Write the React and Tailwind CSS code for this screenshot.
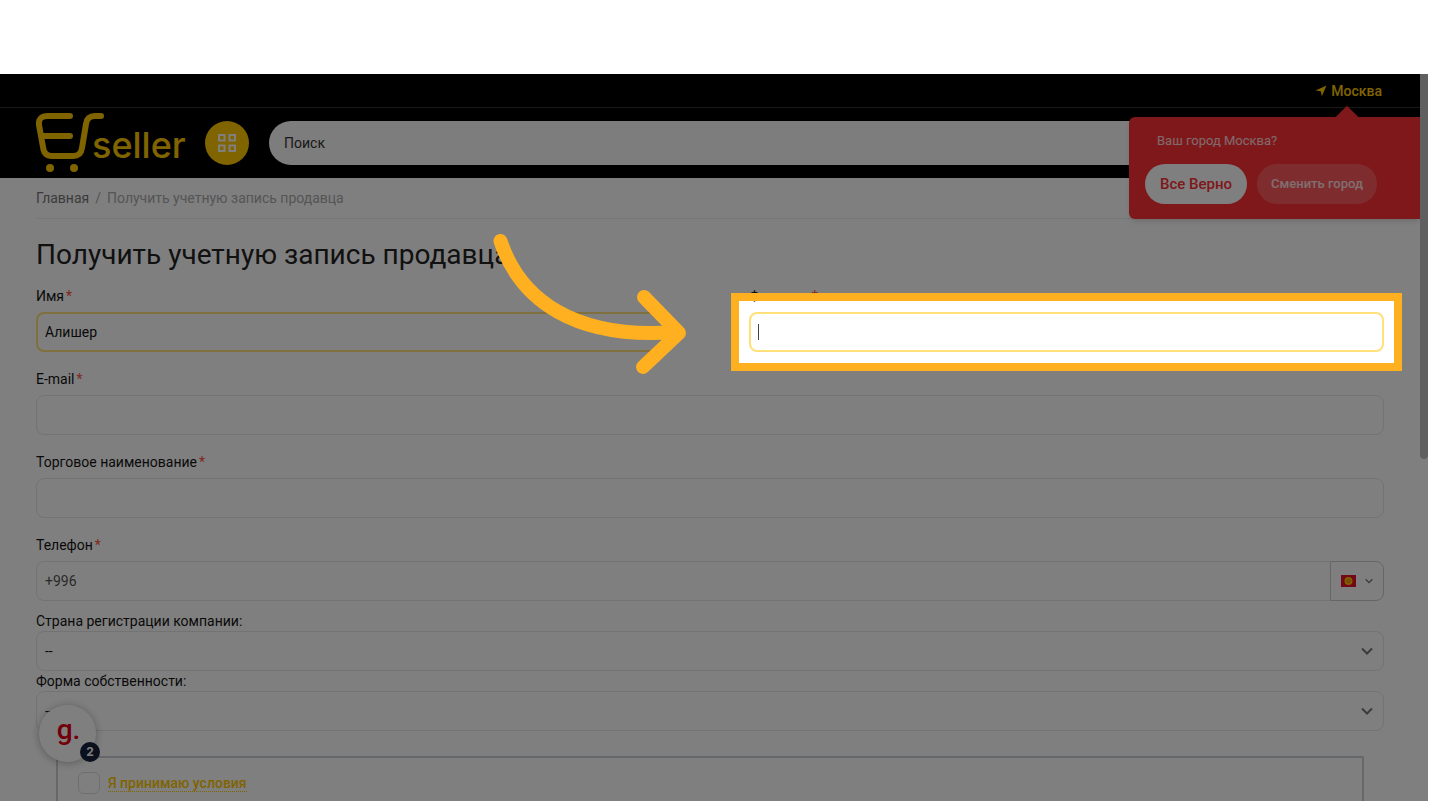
import { useState } from 'react';

const companyFields = [
  { id: 'country', label: 'Страна регистрации компании:' },
  { id: 'ownership', label: 'Форма собственности:' },
];

const Label = ({ htmlFor, required, children }) => (
  <label htmlFor={htmlFor} className="block text-sm text-[#141414]">
    {children}
    {required && <span className="ml-[2px] text-[#ff5040]">*</span>}
  </label>
);

const inputBase = 'block w-full h-10 rounded-lg bg-white text-sm text-[#141414] outline-none';

const Chevron = ({ className }) => (
  <svg viewBox="0 0 12 8" fill="none" stroke="currentColor" strokeWidth="2" className={className}>
    <path d="M1 1.5 L6 6.5 L11 1.5" />
  </svg>
);

const Logo = () => (
  <a href="#" className="flex w-[150px] shrink-0 items-center text-[#ffc800]">
    <svg viewBox="0 0 70 60" className="h-[60px] w-[70px] shrink-0" fill="none" stroke="currentColor" strokeWidth="6" strokeLinecap="round" strokeLinejoin="round">
      <path d="M34 3 H12 Q2 3 3 12 L7 34 Q8 43 16 43 H37 Q45 43 46 35 L50 11 Q51 3 59 3 H65" />
      <path d="M6 23 H34" />
      <circle cx="14" cy="55" r="4" fill="currentColor" stroke="none" />
      <circle cx="38" cy="55" r="4" fill="currentColor" stroke="none" />
    </svg>
    <span className="-ml-[14px] pt-1 font-['Inter'] text-[36px] leading-10 font-medium">seller</span>
  </a>
);

/* "Is this your city?" bubble under the location link */
const CityPopover = () => (
  <div className="absolute right-0 top-[43px] z-20 h-[102px] w-[291px] rounded-l-md bg-[#ff3037] pl-4 pt-[13px] shadow-md">
    <div className="absolute right-[65px] -top-2 size-4 rotate-45 bg-[#ff3037]" />
    <p className="relative pl-3 text-[13px] leading-[22px] text-white/80">Ваш город Москва?</p>
    <div className="relative mt-3 flex gap-[10px]">
      <button className="h-10 w-[102px] rounded-full bg-white text-[15px] font-medium text-[#ff3037]">Все Верно</button>
      <button className="h-10 w-[120px] rounded-full bg-white/20 text-[13px] font-medium text-white/80">Сменить город</button>
    </div>
  </div>
);

/* Dims everything except the field it is placed in */
const Spotlight = () => (
  <>
    <div className="pointer-events-none absolute -inset-x-[18px] -inset-y-[19px] z-40 border-8 border-[#ffb020] shadow-[0_0_0_2000px_rgb(0_0_0/0.5)]" />
    <svg viewBox="0 0 200 150" fill="none" stroke="#ffb020" strokeWidth="14" strokeLinecap="round" strokeLinejoin="round" className="pointer-events-none absolute -top-[82px] right-full z-50 mr-[59px] h-[150px] w-[200px]">
      <path d="M10.5 11 C30 70 85 110 186 102" />
      <path d="M154 67 L189 103 L153 137" />
    </svg>
  </>
);

const ChatWidget = () => (
  <button className="absolute bottom-[39px] left-[39px] z-20 size-[57px] rounded-full bg-white shadow-[0_1px_8px_rgb(0_0_0/0.3)]">
    <span className="block pb-2 pl-[2px] font-['Roboto'] text-[28px] leading-8 font-medium text-[#e60012]">g.</span>
    <span className="absolute -right-1 bottom-0 flex size-5 items-center justify-center rounded-full bg-[#14203a] font-['Inter'] text-xs font-bold text-white">2</span>
  </button>
);

export default function App() {
  const [name, setName] = useState('Алишер');
  const [surname, setSurname] = useState('');
  const [phone, setPhone] = useState('+996');

  return (
    <div className="flex h-screen flex-col bg-white pt-[74px] pb-[5px] font-['Roboto',sans-serif]">
      <div className="relative mr-[2px] min-h-0 flex-1 overflow-hidden bg-white">
        <div className="absolute right-0 top-0 z-30 h-[385px] w-2 rounded-b bg-[#c0c0c0]" />

        <header className="relative bg-black pr-2">
          <div className="flex h-[34px] items-center justify-end border-b border-[#333333] px-[38px]">
            <a href="#" className="flex items-center gap-1 text-sm font-medium text-[#ffc800]">
              <svg viewBox="0 0 12 12" className="size-3" fill="currentColor">
                <path d="M0.5 5.5 L11.5 0.5 L6.8 11.3 L5.8 6.3 Z" />
              </svg>
              Москва
            </a>
          </div>
          <div className="flex h-[70px] items-center px-9">
            <Logo />
            <button aria-label="Каталог" className="ml-[19px] flex size-11 shrink-0 items-center justify-center rounded-full bg-[#ffc800]">
              <svg viewBox="0 0 20 20" className="size-5" fill="none" stroke="#fff" strokeWidth="2">
                <rect x="2" y="2" width="5.5" height="5.5" />
                <rect x="12.5" y="2" width="5.5" height="5.5" />
                <rect x="2" y="12.5" width="5.5" height="5.5" />
                <rect x="12.5" y="12.5" width="5.5" height="5.5" />
              </svg>
            </button>
            <input type="search" aria-label="Поиск" placeholder="Поиск" className="ml-5 h-11 min-w-0 flex-1 rounded-full bg-[#fafafa] px-[15px] text-sm text-[#141414] outline-none placeholder:text-[#333333]" />
          </div>
          <div className="absolute right-2 top-0">
            <CityPopover />
          </div>
        </header>

        <main className="pr-11 pl-9">
          <nav className="flex h-[41px] items-center gap-[6px] border-b border-[#eeeeee] text-sm text-[#aaaaaa]">
            <a href="#" className="text-[#777777]">Главная</a>
            <span>/</span>
            <span>Получить учетную запись продавца</span>
          </nav>

          <h1 className="mt-5 text-[28px] leading-8 text-[#222222]">Получить учетную запись продавца</h1>

          <form className="mt-[15px]">
            <div className="grid grid-cols-2 gap-x-[78px]">
              <div>
                <Label htmlFor="name" required>Имя</Label>
                <input id="name" value={name} onChange={(e) => setName(e.target.value)} className={`${inputBase} mt-[6px] border-2 border-[#ffe07a] px-[7px]`} />
              </div>
              <div>
                <Label htmlFor="surname" required>Фамилия</Label>
                <div className="relative mt-[6px]">
                  <input id="surname" value={surname} onChange={(e) => setSurname(e.target.value)} className={`${inputBase} border-2 border-[#ffe07a] px-[7px]`} />
                  <span className="absolute left-[9px] top-3 h-4 w-px bg-[#444444]" />
                  <Spotlight />
                </div>
              </div>
            </div>

            <div className="mt-[17px]">
              <Label htmlFor="email" required>E-mail</Label>
              <input id="email" type="email" className={`${inputBase} mt-[6px] border border-[#e6e6e6] px-2`} />
            </div>

            <div className="mt-[17px]">
              <Label htmlFor="brand" required>Торговое наименование</Label>
              <input id="brand" className={`${inputBase} mt-[6px] border border-[#e6e6e6] px-2`} />
            </div>

            <div className="mt-[17px]">
              <Label htmlFor="phone" required>Телефон</Label>
              <div className="mt-[6px] flex h-10">
                <input id="phone" type="tel" value={phone} onChange={(e) => setPhone(e.target.value)} className="min-w-0 flex-1 rounded-l-lg border border-r-0 border-[#e6e6e6] px-2 text-sm text-[#555555] outline-none" />
                <button type="button" aria-label="Код страны" className="flex w-[54px] items-center justify-between rounded-r-lg border border-[#cccccc] px-[10px] text-[#777777]">
                  <svg viewBox="0 0 15 12" className="h-3 w-[15px]">
                    <rect width="15" height="12" fill="#e8112d" />
                    <circle cx="7.5" cy="6" r="4" fill="#ffc000" />
                    <circle cx="7.5" cy="6" r="1.5" fill="none" stroke="#e86a10" />
                  </svg>
                  <Chevron className="h-[6px] w-2" />
                </button>
              </div>
            </div>

            <div className="mt-[10px]">
              {companyFields.map((field) => (
                <div key={field.id}>
                  <Label htmlFor={field.id}>{field.label}</Label>
                  <div className="relative">
                    <select id={field.id} className={`${inputBase} appearance-none border border-[#e6e6e6] px-2`}>
                      <option>--</option>
                    </select>
                    <Chevron className="pointer-events-none absolute top-4 right-[11px] h-2 w-3 text-[#777777]" />
                  </div>
                </div>
              ))}
            </div>

            <div className="mx-5 mt-[25px] h-40 rounded-xs border-2 border-[#c8d0d4] px-5 pt-[14px]">
              <div className="flex items-center gap-2">
                <input id="terms" type="checkbox" aria-label="Я принимаю условия" className="size-[22px] appearance-none rounded-md border border-[#dddddd] bg-white" />
                <a href="#" className="border-b border-dotted border-[#ffc800] text-sm leading-4 font-medium text-[#ffc800]">Я принимаю условия</a>
              </div>
            </div>
          </form>
        </main>

        <ChatWidget />
      </div>
    </div>
  );
}
